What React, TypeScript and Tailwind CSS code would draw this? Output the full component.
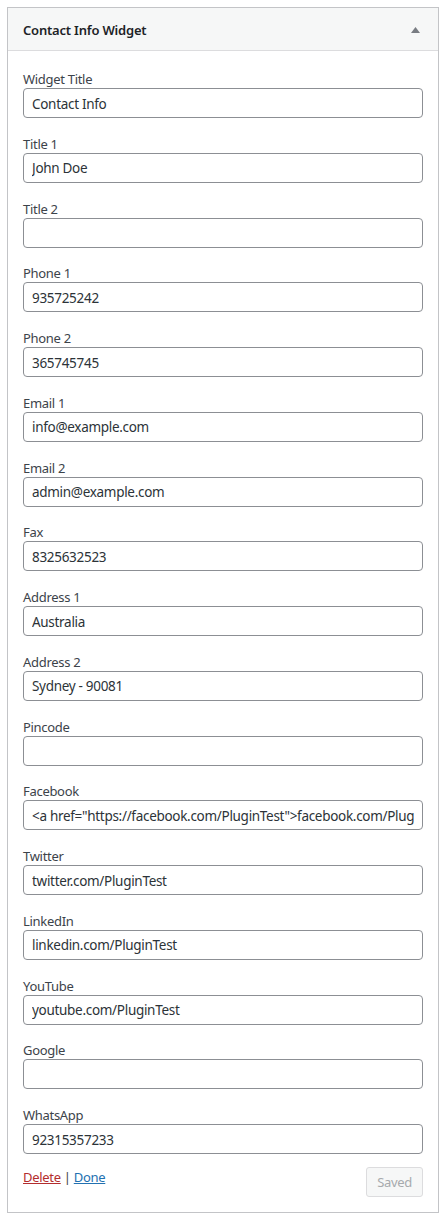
const fields: { label: string; value: string }[] = [
  { label: "Widget Title", value: "Contact Info" },
  { label: "Title 1", value: "John Doe" },
  { label: "Title 2", value: "" },
  { label: "Phone 1", value: "935725242" },
  { label: "Phone 2", value: "365745745" },
  { label: "Email 1", value: "info@example.com" },
  { label: "Email 2", value: "admin@example.com" },
  { label: "Fax", value: "8325632523" },
  { label: "Address 1", value: "Australia" },
  { label: "Address 2", value: "Sydney - 90081" },
  { label: "Pincode", value: "" },
  { label: "Facebook", value: '<a href="https://facebook.com/PluginTest">facebook.com/PluginTest</a>' },
  { label: "Twitter", value: "twitter.com/PluginTest" },
  { label: "LinkedIn", value: "linkedin.com/PluginTest" },
  { label: "YouTube", value: "youtube.com/PluginTest" },
  { label: "Google", value: "" },
  { label: "WhatsApp", value: "92315357233" },
];

export default function App() {
  return (
    <div className="min-h-[1223px] bg-white pt-[7px] pl-[7px] font-['Noto_Sans',sans-serif] text-[13px] tracking-[-0.3px] text-[#3c434a]">
      <div className="w-[432px] border border-[#c3c4c7] bg-white">
        {/* widget header */}
        <div className="flex h-[43px] items-center justify-between border-b border-[#dcdcde] bg-[#f6f7f7] pl-[15px] pr-[18px]">
          <h3 className="pt-[3px] text-[13px] font-semibold tracking-[-0.2px] text-[#1d2327]">Contact Info Widget</h3>
          <svg width="9" height="6" viewBox="0 0 9 6" className="mt-[2px]">
            <path d="M0 6 L4.5 0 L9 6 Z" fill="#787c82" />
          </svg>
        </div>

        {/* widget form */}
        <div className="px-[15px] pt-[17px] pb-[15px]">
          <div className="flex flex-col gap-[14.75px]">
            {fields.map((f) => (
              <div key={f.label}>
                <label className="block h-[20px] leading-[22px]">{f.label}</label>
                <input
                  type="text"
                  defaultValue={f.value}
                  className="block h-[30px] w-[400px] rounded-[4px] border border-[#8c8f94] bg-white px-[8px] pt-[1px] text-[13.5px] tracking-[-0.3px] text-[#2c3338] outline-none"
                />
              </div>
            ))}
          </div>

          <div className="mt-[13px] flex items-start justify-between">
            <div className="leading-[20px]">
              <a href="#" className="text-[#b32d2e] underline">Delete</a>
              <span className="text-[#3c434a]"> | </span>
              <a href="#" className="text-[#2271b1] underline">Done</a>
            </div>
            <button
              disabled
              className="h-[30px] rounded-[3px] border border-[#dcdcde] bg-[#f6f7f7] px-[10px] pt-[1px] text-[13px] text-[#a7aaad]"
            >
              Saved
            </button>
          </div>
        </div>
      </div>
    </div>
  );
}
